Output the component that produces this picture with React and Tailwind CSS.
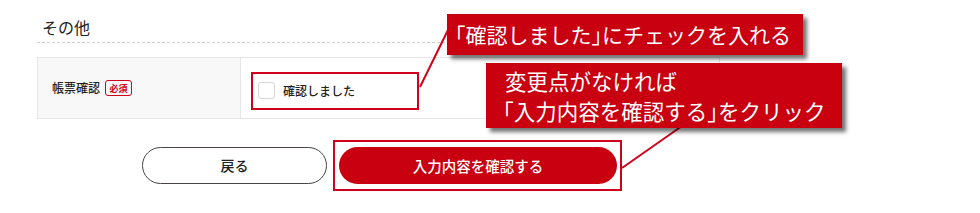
function Br({ children }) {
  return <span className="[font-feature-settings:'halt']">{children}</span>;
}

export default function App() {
  const jp = { fontFamily: '"Noto Sans CJK JP", "Noto Sans", sans-serif' };
  return (
    <div className="relative w-[980px] h-[213px] bg-white overflow-hidden text-[#222]" style={jp}>
      <div className="ml-[37px] w-[683px] pt-[14px]">
        <div className="h-[29px] pl-[5px] border-b border-dashed border-[#cfcfcf] text-[16px] leading-[26px]">
          その他
        </div>
        <div className="mt-[14px] flex h-[62px] border border-[#e6e6e6]">
          <div className="w-[203px] flex items-center pl-[14px] bg-[#f8f8f8] border-r border-[#e6e6e6]">
            <span className="text-[12px] font-medium leading-none">帳票確認</span>
            <span className="ml-[5px] flex items-center justify-center w-[27px] h-[16px] rounded-[3px] border border-[#d0021b] text-[#d0021b] text-[9px] font-bold leading-none">
              必須
            </span>
          </div>
          <div className="flex-1 flex items-center pl-[10px] pt-[5px] bg-white">
            <div className="flex items-center w-[168px] h-[38px] border-2 border-[#d0021b] pl-[5px]">
              <span className="w-[17px] h-[17px] rounded-[3px] border border-[#d4d4d4] bg-white" />
              <span className="ml-[8px] text-[12px] font-medium leading-none">確認しました</span>
            </div>
          </div>
        </div>
        <div className="mt-[21px] flex items-center ml-[105px]">
          <button className="w-[185px] h-[37px] rounded-full border-[1.5px] border-[#4a4444] bg-white text-[14px] font-medium text-[#222]">
            戻る
          </button>
          <div className="ml-[6px] w-[289px] h-[51px] border-2 border-[#d0021b] pl-[4px] pt-[5px]">
            <button className="w-[278px] h-[37px] rounded-full bg-[#c8000f] text-white text-[14.5px] font-medium">
              入力内容を確認する
            </button>
          </div>
        </div>
      </div>

      <svg className="absolute left-0 top-0 pointer-events-none" width="980" height="213">
        <line x1="420" y1="87" x2="448" y2="30" stroke="#d0021b" strokeWidth="2" />
        <line x1="622" y1="168" x2="682" y2="126" stroke="#d0021b" strokeWidth="2" />
      </svg>

      <div className="absolute left-[447px] top-[14px] w-[356px] h-[41px] bg-[#c8000f] shadow-[4px_4px_4px_rgba(0,0,0,0.55)] flex items-center pl-[8px] text-white text-[21px] leading-none whitespace-nowrap">
        <Br>「</Br>確認しました<Br>」</Br>にチェックを入れる
      </div>
      <div className="absolute left-[486px] top-[63px] w-[356px] h-[65px] bg-[#c8000f] shadow-[4px_4px_4px_rgba(0,0,0,0.55)] pl-[17px] pt-[3px] text-white text-[21.5px] leading-[30px] whitespace-nowrap">
        <div className="pl-[2px]">変更点がなければ</div>
        <div>
          <Br>「</Br>入力内容を確認する<Br>」</Br>をクリック
        </div>
      </div>
    </div>
  );
}
